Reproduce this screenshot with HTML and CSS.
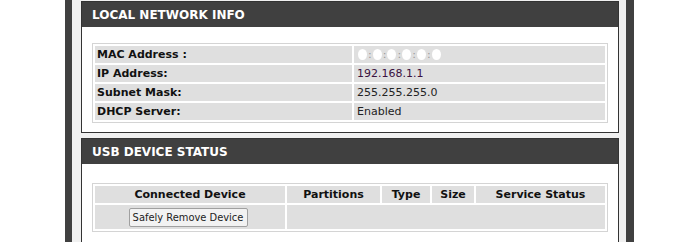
FILE: index.html
```
<!doctype html>
<html lang="en">
<head>
    <meta charset="UTF-8">
    <title>Device Info</title>
    <link rel="stylesheet" href="styles.css">
</head>
<body>
<div class="page">
    <div class="content">
        <div class="box">
            <h2 class="box-title">LOCAL NETWORK INFO</h2>
            <div class="box-body">
                <table class="info">
                    <tr>
                        <td class="label">MAC Address :</td>
                        <td class="value mac"><span class="dot"></span>:<span class="dot"></span>:<span class="dot"></span>:<span class="dot"></span>:<span class="dot"></span>:<span class="dot"></span></td>
                    </tr>
                    <tr>
                        <td class="label">IP Address:</td>
                        <td class="value ip">192.168.1.1</td>
                    </tr>
                    <tr>
                        <td class="label">Subnet Mask:</td>
                        <td class="value">255.255.255.0</td>
                    </tr>
                    <tr>
                        <td class="label">DHCP Server:</td>
                        <td class="value">Enabled</td>
                    </tr>
                </table>
            </div>
        </div>

        <div class="box">
            <h2 class="box-title">USB DEVICE STATUS</h2>
            <div class="box-body usb-body">
                <table class="usb">
                    <tr>
                        <th class="c-dev">Connected Device</th>
                        <th class="c-part">Partitions</th>
                        <th class="c-type">Type</th>
                        <th class="c-size">Size</th>
                        <th class="c-stat">Service Status</th>
                    </tr>
                    <tr>
                        <td class="btn-cell"><button class="btn">Safely Remove Device</button></td>
                        <td colspan="4"></td>
                    </tr>
                </table>
            </div>
        </div>
    </div>
</div>
</body>
</html>
```
FILE: styles.css
```
* {
    margin: 0;
    padding: 0;
    box-sizing: border-box;
}

body {
    background: #fff;
    font-family: "DejaVu Sans", sans-serif;
    font-size: 11px;
    color: #000;
}

.page {
    margin-left: 65px;
    width: 569px;
    height: 242px;
    border-left: 7px solid #404040;
    border-right: 8px solid #404040;
    background: #f0f0f0;
}

.content {
    padding: 1px 7px 0 9px;
}

.box {
    background: #fff;
    border: 1px solid #333;
    margin-bottom: 5px;
}

.box-title {
    background: #404040;
    color: #fff;
    font-size: 12px;
    font-weight: bold;
    height: 25px;
    line-height: 26px;
    padding-left: 10px;
}

.box-body {
    padding: 16px 10px 9px;
}

.usb-body {
    padding-top: 19px;
    padding-bottom: 11px;
}

table {
    width: 100%;
    border: 1px solid #d4d4d4;
    border-spacing: 2px;
    background: #fff;
}

td, th {
    background: #dfdfdf;
    height: 17px;
    padding: 0 2px;
    text-align: left;
    vertical-align: middle;
}

.label {
    width: 257px;
    font-weight: bold;
    color: #111;
}

.value {
    padding-left: 3px;
    color: #222;
}

.ip {
    color: #3a1240;
}

.dot {
    display: inline-block;
    width: 9px;
    height: 11px;
    border-radius: 50%;
    background: #fff;
    vertical-align: -2px;
    margin: 0 1px;
}

.mac {
    color: #999;
}

.usb th {
    text-align: center;
    font-weight: bold;
    color: #111;
}

.c-dev { width: 190px; }
.c-part { width: 93px; }
.c-type { width: 48px; }
.c-size { width: 42px; }

.btn-cell {
    height: 24px;
    text-align: center;
    padding-right: 6px;
}

.btn {
    font-family: "DejaVu Sans Condensed", "DejaVu Sans", sans-serif;
    font-size: 11px;
    height: 19px;
    width: 119px;
    padding: 0;
    background: #f2f2f2;
    border: 1px solid #a0a0a0;
    border-radius: 2px;
    color: #222;
}
```
